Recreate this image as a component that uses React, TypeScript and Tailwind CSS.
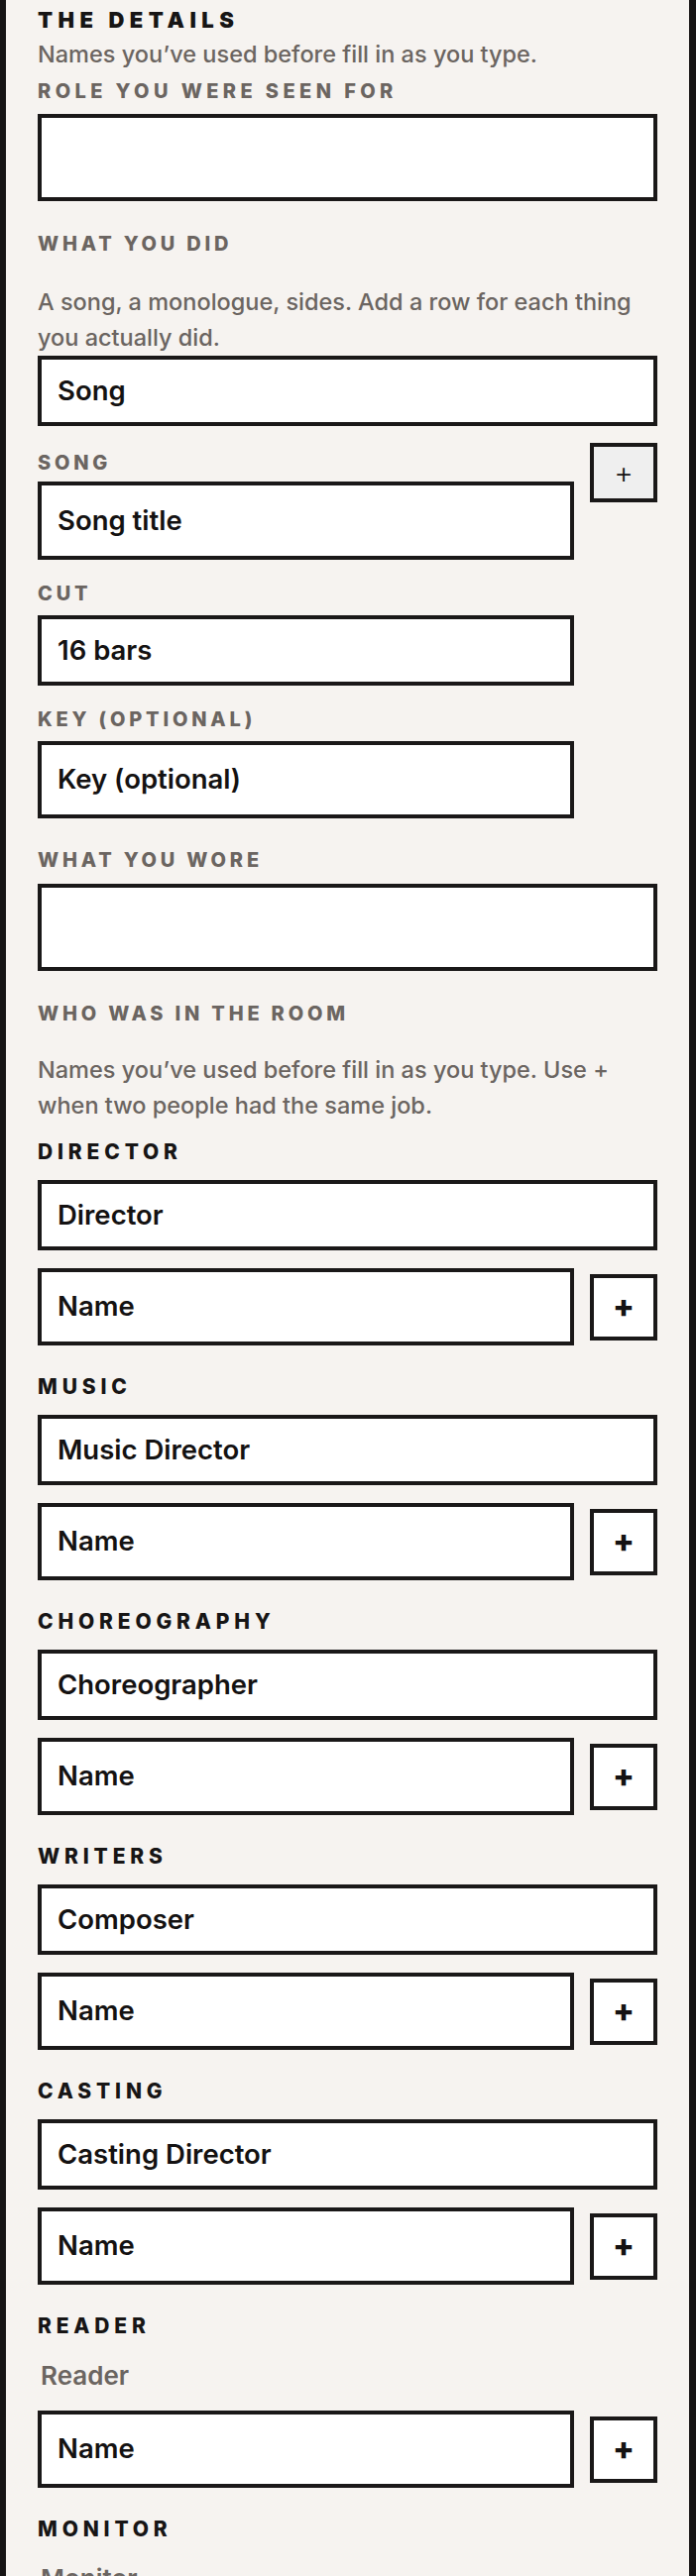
const ROOM = [
  { label: "Director", role: "Director" },
  { label: "Music", role: "Music Director" },
  { label: "Choreography", role: "Choreographer" },
  { label: "Writers", role: "Composer" },
  { label: "Casting", role: "Casting Director" },
];

function Label({ children, className = "" }: { children: React.ReactNode; className?: string }) {
  return (
    <p className={`text-[20px] leading-[24px] font-extrabold uppercase tracking-[0.19em] text-[#6b6561] ${className}`}>
      {children}
    </p>
  );
}

function GroupLabel({ children }: { children: React.ReactNode }) {
  return (
    <p className="text-[21px] leading-[24px] font-extrabold uppercase tracking-[0.23em] text-[#171515]">
      {children}
    </p>
  );
}

function Box({ children, className = "" }: { children?: React.ReactNode; className?: string }) {
  return (
    <div
      className={`flex items-center border-4 border-[#1a1818] bg-white px-4 text-[27.5px] font-semibold text-[#141212] ${className}`}
    >
      {children}
    </div>
  );
}

function NameRow({ className = "" }: { className?: string }) {
  return (
    <div className={`flex items-center gap-4 ${className}`}>
      <Box className="h-[78px] flex-1">Name</Box>
      <button className="flex h-[67px] w-[68px] items-center justify-center border-4 border-[#1a1818] bg-white text-[32px] leading-none font-extrabold text-[#141212]">
        +
      </button>
    </div>
  );
}

export default function App() {
  return (
    <div className="flex min-h-[2600px] bg-[#161414] pl-[6px] pr-[7px] font-['Inter','Liberation_Sans',sans-serif]">
      <div className="flex-1 bg-[#f6f3f0] px-8 pt-[6px]">
        <h2 className="text-[22px] leading-[28px] font-black uppercase tracking-[0.25em] text-[#171515]">
          The Details
        </h2>
        <p className="mt-[5px] text-[23.5px] leading-[32px] font-medium text-[#6b6561]">
          Names you’ve used before fill in as you type.
        </p>

        <Label className="mt-[9px] tracking-[0.22em]">Role you were seen for</Label>
        <Box className="mt-[11px] h-[88px]" />

        <Label className="mt-[31px]">What you did</Label>
        <p className="mt-[29px] text-[23.5px] leading-[36px] font-medium text-[#6b6561]">
          A song, a monologue, sides. Add a row for each thing you actually did.
        </p>
        <Box className="h-[71px] font-extrabold">Song</Box>

        <div className="mt-[17px] flex items-start gap-4">
          <div className="flex-1">
            <Label className="mt-[8px]">Song</Label>
            <Box className="mt-[7px] h-[79px]">Song title</Box>
            <Label className="mt-[22px]">Cut</Label>
            <Box className="mt-[10px] h-[71px]">16 bars</Box>
            <Label className="mt-[22px]">Key (optional)</Label>
            <Box className="mt-[10px] h-[78px]">Key (optional)</Box>
          </div>
          <button className="flex h-[60px] w-[68px] items-center justify-center border-4 border-[#1a1818] bg-[#efefef] text-[30px] leading-none font-light text-[#141212]">
            +
          </button>
        </div>

        <Label className="mt-[30px]">What you wore</Label>
        <Box className="mt-[12px] h-[88px]" />

        <Label className="mt-[31px]">Who was in the room</Label>
        <p className="mt-[27px] text-[23.5px] leading-[36px] font-medium text-[#6b6561]">
          Names you’ve used before fill in as you type. Use + when two people had the same job.
        </p>

        {ROOM.map((g, i) => (
          <div key={g.label} className={i === 0 ? "mt-[17px]" : "mt-[30px]"}>
            <GroupLabel>{g.label}</GroupLabel>
            <Box className="mt-[16px] h-[71px]">{g.role}</Box>
            <NameRow className="mt-[18px]" />
          </div>
        ))}

        <div className="mt-[30px]">
          <GroupLabel>Reader</GroupLabel>
          <p className="mt-[23px] pl-[3px] text-[26px] leading-[30px] font-semibold text-[#6b6561]">
            Reader
          </p>
          <NameRow className="mt-[20px]" />
        </div>

        <div className="mt-[30px]">
          <GroupLabel>Monitor</GroupLabel>
          <p className="mt-[23px] pl-[3px] text-[26px] leading-[30px] font-semibold text-[#6b6561]">
            Monitor
          </p>
          <NameRow className="mt-[20px]" />
        </div>
      </div>
    </div>
  );
}
